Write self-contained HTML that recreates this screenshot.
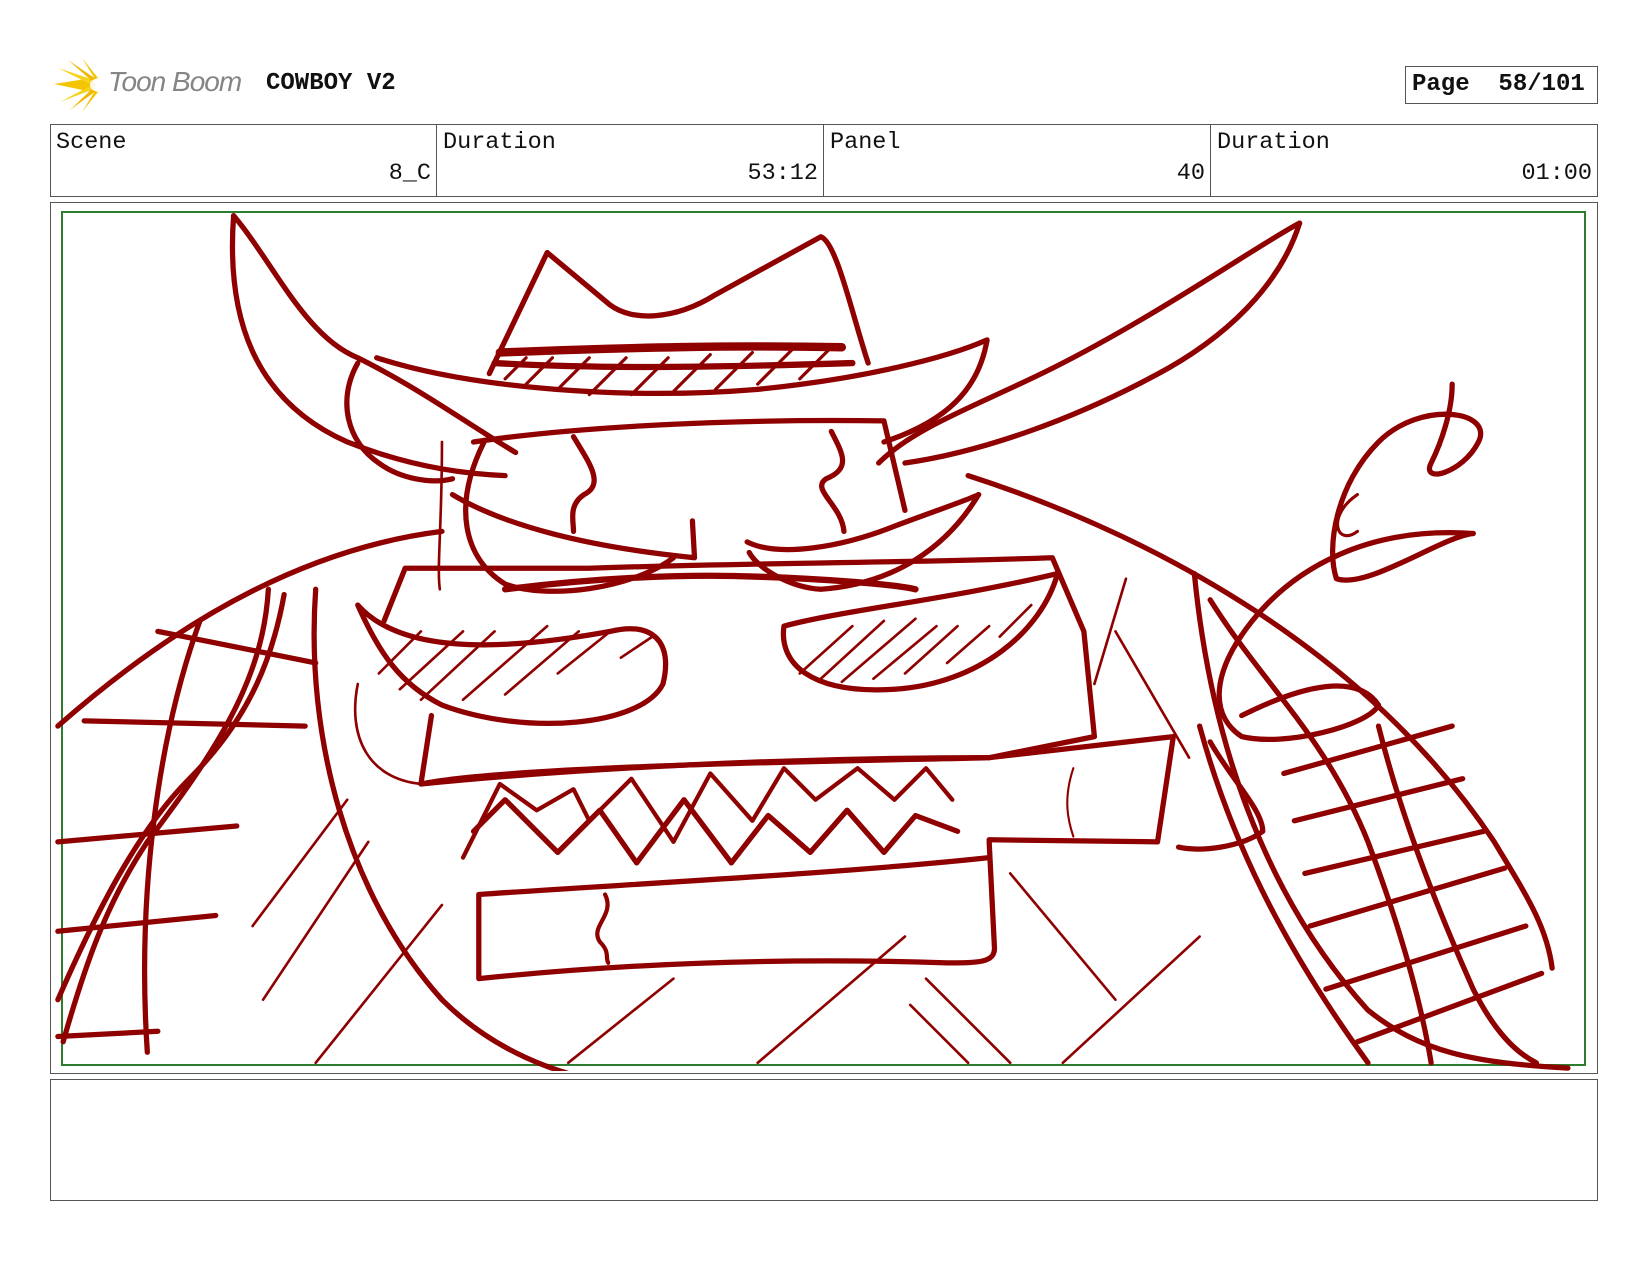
<!DOCTYPE html>
<html><head><meta charset="utf-8">
<style>
html,body{margin:0;padding:0;background:#fff;}
body{width:1650px;height:1275px;position:relative;overflow:hidden;font-family:"Liberation Mono",monospace;}
.abs{position:absolute;}
.box{position:absolute;border:1px solid #555;box-sizing:border-box;}
.lbl{position:absolute;font-size:23.5px;color:#111;}
</style></head><body>
<svg class="abs" style="left:52px;top:58px" width="60" height="54" viewBox="0 0 60 54">
 <g fill="#f5c400">
  <path d="M2 26 L40 20 L44 27 L40 34 Z"/>
  <path d="M6 10 L42 22 L38 26 Z" fill="#f7d21a"/>
  <path d="M16 2 L44 21 L40 23 Z" fill="#f0b800"/>
  <path d="M8 44 L42 31 L38 28 Z" fill="#f7d21a"/>
  <path d="M18 52 L44 33 L40 31 Z" fill="#f0b800"/>
  <path d="M30 0 L46 20 L43 21 Z"/>
  <path d="M30 54 L46 34 L43 33 Z"/>
 </g>
 <circle cx="44" cy="27" r="6" fill="#fff" opacity=".9"/>
</svg>
<div class="abs" style="left:108px;top:66px;font-family:'Liberation Sans',sans-serif;font-style:italic;font-size:28px;color:#858585;letter-spacing:-1px">Toon Boom</div>
<div class="abs" style="left:266px;top:70px;font-weight:bold;font-size:24px;color:#111">COWBOY V2</div>
<div class="box" style="left:1405px;top:66px;width:193px;height:38px"></div>
<div class="abs" style="left:1412px;top:71px;font-weight:bold;font-size:24px;color:#111;white-space:pre">Page  58/101</div>

<div class="box" style="left:50px;top:124px;width:1548px;height:73px"></div>
<div class="abs" style="left:436px;top:124px;width:1px;height:73px;background:#555"></div>
<div class="abs" style="left:823px;top:124px;width:1px;height:73px;background:#555"></div>
<div class="abs" style="left:1210px;top:124px;width:1px;height:73px;background:#555"></div>
<div class="lbl" style="left:56px;top:129px">Scene</div>
<div class="lbl" style="left:443px;top:129px">Duration</div>
<div class="lbl" style="left:830px;top:129px">Panel</div>
<div class="lbl" style="left:1217px;top:129px">Duration</div>
<div class="lbl" style="left:320px;top:160px;width:111px;text-align:right">8_C</div>
<div class="lbl" style="left:707px;top:160px;width:111px;text-align:right">53:12</div>
<div class="lbl" style="left:1094px;top:160px;width:111px;text-align:right">40</div>
<div class="lbl" style="left:1481px;top:160px;width:111px;text-align:right">01:00</div>

<div class="box" style="left:50px;top:202px;width:1548px;height:872px"></div>
<div class="abs" style="left:61px;top:211px;width:1525px;height:855px;border:2px solid #2e7d2e;box-sizing:border-box"></div>
<div class="box" style="left:50px;top:1079px;width:1548px;height:122px"></div>

<svg class="abs" style="left:0;top:0" width="1650" height="1275" viewBox="0 0 1650 1275">
<defs><clipPath id="c"><rect x="53" y="205" width="1542" height="866"/></clipPath></defs>
<g clip-path="url(#c)"><g transform="scale(1.0523)" fill="none" stroke="#8f0000" stroke-linecap="round" stroke-linejoin="round" stroke-width="5">
 <path d="M222 205 C215 300 240 380 330 420 C380 440 430 450 480 452"/>
 <path d="M222 205 C260 250 290 320 340 340 C400 370 440 400 490 430"/>
 <path d="M1235 212 C1200 230 1100 300 1000 350 C930 385 870 405 835 440"/>
 <path d="M1235 212 C1220 260 1180 310 1110 350 C1020 400 930 430 860 440"/>
 <path d="M465 355 L520 240 L580 290 C600 305 640 305 680 280 L780 225 C795 230 810 300 825 345"/>
 <path d="M475 335 C600 330 700 328 800 330" stroke-width="8"/>
 <path d="M358 340 C450 370 600 380 720 370 C820 360 900 340 938 323 C930 370 900 400 840 420"/>
 <path d="M340 345 C320 380 330 420 360 440 C380 455 410 460 430 455"/>
 <path d="M480 360 l20 -20 M500 365 l25 -25 M530 370 l30 -30 M560 375 l35 -35 M600 375 l35 -35 M640 372 l35 -35 M680 370 l35 -35 M720 365 l35 -35 M760 360 l30 -30" stroke-width="3"/>
 <path d="M470 345 C560 350 650 350 810 345" stroke-width="6"/>
 <path d="M450 420 C550 405 700 398 840 400 L860 485"/>
 <path d="M545 415 C560 440 575 460 555 470 C540 480 545 495 545 505"/>
 <path d="M790 410 C800 430 810 445 785 455 C770 465 800 480 802 505"/>
 <path d="M460 420 C430 480 440 530 480 555 C520 570 600 560 640 530"/>
 <path d="M430 470 C480 500 560 520 660 530 L658 495"/>
 <path d="M710 515 C740 530 800 520 850 500 C890 485 920 475 930 470"/>
 <path d="M930 470 C900 520 850 555 780 560 C750 558 720 540 712 525"/>
 <path d="M480 560 C560 550 640 545 720 548 C780 550 850 555 870 560" stroke-width="6"/>
 <path d="M920 452 C1100 510 1300 620 1420 800 C1450 850 1470 880 1475 920"/>
 <path d="M420 505 C300 520 180 580 55 690"/>
 <path d="M300 560 C290 700 330 850 420 950 C480 1010 560 1030 600 1030"/>
 <path d="M1135 545 C1150 700 1200 850 1300 960 C1350 1000 1400 1010 1490 1015"/>
 <path d="M365 590 L385 540 L560 540 C700 535 860 535 1000 530 L1030 600 L1040 700 L940 720 C900 722 500 725 400 745 L410 680"/>
 <path d="M340 575 C380 620 470 620 580 600 C620 590 640 610 630 650 C610 690 500 700 420 670 C380 650 360 620 340 575"/>
 <path d="M745 595 C800 580 900 570 1005 545 C990 600 930 650 850 655 C770 660 740 630 745 595"/>
 <path d="M360 640 l40 -40 M380 655 l60 -55 M400 665 l70 -65 M440 665 l80 -70 M480 660 l70 -60 M530 640 l50 -40 M590 625 l30 -20" stroke-width="2.5"/>
 <path d="M760 640 l50 -45 M780 645 l60 -55 M800 648 l70 -60 M830 645 l60 -50 M860 640 l50 -45 M900 630 l40 -35 M950 605 l30 -30" stroke-width="2.5"/>
 <path d="M400 745 C550 730 750 720 940 720"/>
 <path d="M440 815 L475 745 L510 770 L545 750 L560 780 L600 740 L640 800 L675 735 L715 780 L745 730 L775 760 L815 730 L850 760 L880 730 L905 760" stroke-width="4"/>
 <path d="M450 790 L480 760 L530 810 L570 770 L605 820 L650 760 L695 820 L730 775 L770 810 L805 770 L840 810 L870 775 L910 790"/>
 <path d="M940 800 L945 900 C946 915 930 915 900 915 C750 910 600 915 455 930 L455 850 C600 840 800 830 940 815"/>
 <path d="M575 850 C585 870 560 880 570 895 C580 905 575 910 578 915" stroke-width="4"/>
 <path d="M940 798 L1100 800 L1115 700 L940 720"/>
 <path d="M1020 730 C1010 760 1015 780 1020 795" stroke-width="2"/>
 <path d="M1380 365 C1380 390 1370 420 1360 440 C1350 460 1390 450 1405 420 C1420 390 1350 380 1310 420 C1270 460 1260 520 1270 550 C1300 560 1370 510 1400 507"/>
 <path d="M1400 507 C1300 500 1230 540 1190 590 C1150 640 1150 680 1180 700 C1220 710 1300 690 1310 670 C1290 640 1240 650 1180 680"/>
 <path d="M1290 470 C1260 490 1270 520 1290 505" stroke-width="3"/>
 <path d="M1150 570 C1200 650 1260 700 1300 800 C1330 880 1350 950 1360 1010"/>
 <path d="M1140 690 C1170 800 1220 900 1300 1010"/>
 <path d="M1220 735 L1380 690 M1230 780 L1390 740 M1240 830 L1410 790 M1245 880 L1430 825 M1260 940 L1450 880 M1290 990 L1465 925" stroke-width="5"/>
 <path d="M1310 690 C1330 770 1360 850 1400 940 C1420 980 1440 1000 1460 1010"/>
 <path d="M1150 705 C1170 740 1200 770 1200 790 C1180 805 1140 810 1120 805"/>
 <path d="M270 565 C260 620 240 680 180 740 C130 790 90 870 55 950"/>
 <path d="M255 560 C250 650 200 720 140 800 C100 860 80 920 60 990"/>
 <path d="M150 600 L300 630 M80 685 L290 690 M55 800 L225 785 M55 885 L205 870 M55 985 L150 980"/>
 <path d="M190 590 C150 700 130 850 140 1000"/>
 <g stroke-width="2.5">
 <path d="M240 880 L330 760 M250 950 L350 800 M300 1010 L420 860"/>
 <path d="M540 1010 L640 930 M720 1010 L860 890 M1010 1010 L1140 890 M865 955 L920 1010 M880 930 L960 1010 M960 830 L1060 950 M1060 600 L1130 720 M1070 550 L1040 650"/>
 <path d="M340 650 C330 700 350 740 400 745 M420 420 C420 500 415 540 418 560"/>
 </g>
</g></g>
</svg>
</body></html>
